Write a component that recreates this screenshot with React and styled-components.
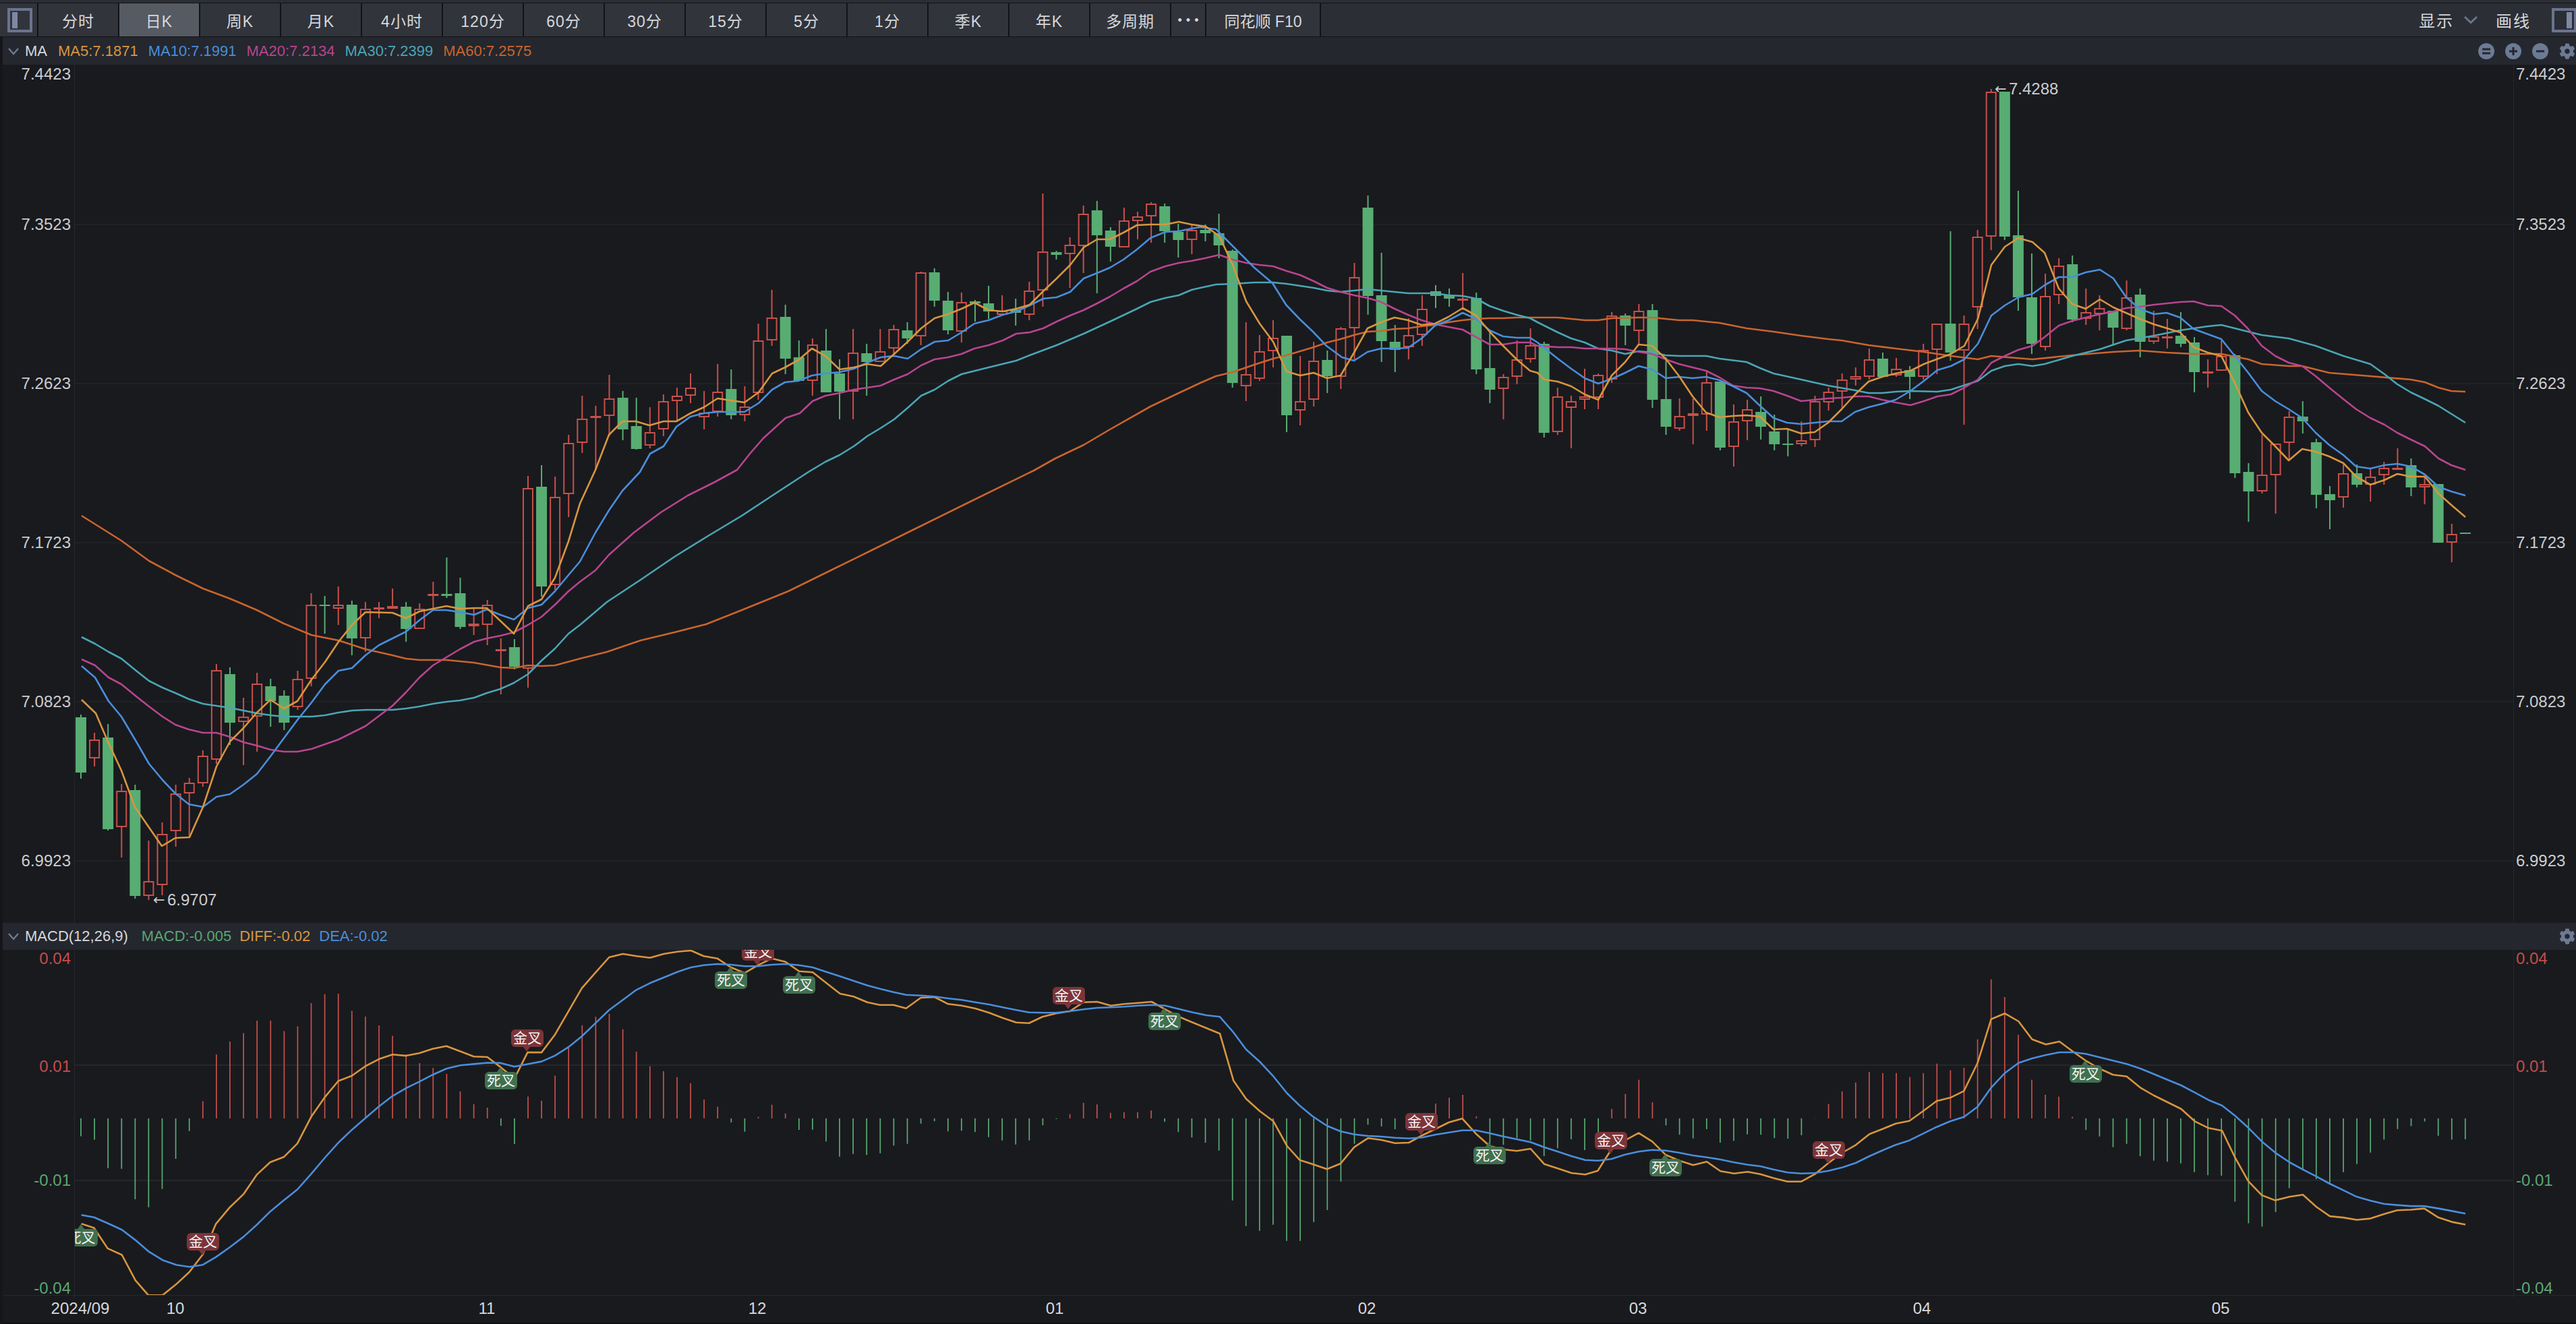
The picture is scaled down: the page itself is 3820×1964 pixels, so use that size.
import React from "react";
import styled, { createGlobalStyle } from "styled-components";
import { FaCog } from "react-icons/fa";

const FONT = `"Liberation Sans", "Noto Sans CJK SC", sans-serif`;
const C = {
  bg: "#191a1e", head: "#24272e", top: "#2b2e35", btn: "#31343b", active: "#555a63", line: "#121316",
  grid: "#222429", axis: "#26282d", text: "#d6d8dc", tick: "#cbcdd0", icon: "#6d7a94",
  up: "#c8504b", down: "#58ad73", ma5: "#d8963f", ma10: "#4a8edb", ma20: "#b8458f", ma30: "#4aa6b5", ma60: "#c9652e",
  macdUp: "#c44d4b", macdDown: "#5ba672",
};

const Global = createGlobalStyle`
  html, body { margin: 0; padding: 0; background: ${C.bg}; }
  * { box-sizing: border-box; }
`;

const Root = styled.div`
  width: 3820px; height: 1964px; overflow: hidden; display: flex; flex-direction: column;
  background: ${C.bg}; font-family: ${FONT}; padding-left: 4px; border-left: 0;
  box-shadow: inset 4px 0 0 #15161a;
`;
const TopStrip = styled.div`height: 5px; background: ${C.top}; border-bottom: 1px solid ${C.line}; margin-left: -4px;`;
const Toolbar = styled.div`
  height: 50px; display: flex; align-items: stretch; background: ${C.top};
  border-bottom: 1px solid ${C.line}; margin-left: -4px;
`;
const LayoutCell = styled.div`width: 57px; display: flex; align-items: center; padding-left: 11px; background: ${C.btn}; border-right: 2px solid ${C.line};`;
const Tab = styled.div`
  width: ${p => p.$w || 120}px; display: flex; align-items: center; justify-content: center;
  font-size: 23px; letter-spacing: ${p => p.$tight ? 0 : 1}px; color: ${C.text}; background: ${p => p.$active ? C.active : C.btn};
  border-right: 2px solid ${C.line};
`;
const Dots = styled.span`font-size: 18px; letter-spacing: 6px; margin-right: -6px; line-height: 1; color: ${C.text};`;
const ToolRight = styled.div`margin-left: auto; display: flex; align-items: center; color: ${C.text}; font-size: 24px; margin-right: -1px;`;
const ToolLabel = styled.span`letter-spacing: 2px; margin-right: ${p => p.$mr}px;`;

const LegendBar = styled.div`
  height: ${p => p.$h}px; display: flex; align-items: center; background: ${C.head};
  font-size: 22px; padding-left: 7px;
`;
const Chevron = styled.svg`width: 18px; height: 12px; margin-right: 8px; flex: none;`;
const Name = styled.span`color: ${C.text}; margin-right: ${p => p.$mr}px;`;
const Value = styled.span`color: ${p => p.$c}; margin-right: ${p => p.$mr}px; white-space: nowrap;`;
const Tools = styled.div`margin-left: auto; display: flex; align-items: center; gap: 16px; padding-right: 1px; color: ${C.icon};`;

const Pane = styled.div`
  height: ${p => p.$h}px; display: grid; grid-template-columns: 107px 3616px 93px;
  ${p => p.$bottom && `border-bottom: 1px solid ${C.axis};`}
`;
const Axis = styled.div`
  display: flex; flex-direction: column; font-size: 24px;
  ${p => p.$left ? `align-items: flex-end; padding-right: 5px; border-right: 1px solid ${C.axis};` : `align-items: flex-start; padding-left: 3px; border-left: 1px solid ${C.axis};`}
`;
const Tick = styled.div`height: 28px; line-height: 28px; margin-top: ${p => p.$gap}px; color: ${p => p.$c || C.tick}; white-space: nowrap;`;
const Plot = styled.div`position: relative; overflow: hidden;`;
const ChartSvg = styled.svg`display: block;`;
const PriceTag = styled.div`position: absolute; display: flex; align-items: center; font-size: 24px; line-height: 28px; color: ${C.tick}; white-space: nowrap;`;
const Arrow = styled.span`width: 21px; font-family: "DejaVu Sans", sans-serif; font-size: 21px; letter-spacing: -2px;`;
const Badge = styled.div`
  position: absolute; width: 48px; height: 26px; border-radius: 6px; text-align: center;
  font-size: 21px; line-height: 26px; color: #f4f4f4; background: ${p => p.$kind === "gold" ? "#7c3439" : "#40704f"};
  &::after {
    content: ""; position: absolute; left: 18px; border-left: 5px solid transparent; border-right: 5px solid transparent;
    ${p => p.$kind === "gold"
      ? `top: 26px; border-top: 7px solid #7c3439;`
      : `top: -7px; border-bottom: 7px solid #40704f;`}
  }
`;
const TimeAxis = styled.div`position: relative; flex: 1; border-bottom: 2px solid #101114;`;
const TimeTick = styled.span`position: absolute; top: 5px; transform: translateX(-50%); font-size: 24px; line-height: 28px; color: ${C.text}; white-space: nowrap;`;

const candles = [
[1060,1064,1146,1155,0],[1087,1097,1125,1137,1],[1074,1094,1230,1232,0],[1163,1173,1227,1272,1],[1164,1172,1329,1333,0],
[1247,1307,1329,1335,1],[1220,1237,1313,1328,1],[1164,1177,1233,1256,1],[1154,1161,1177,1242,1],[1113,1121,1162,1167,1],
[985,994,1127,1133,1],[990,1000,1072,1105,0],[1035,1063,1071,1135,1],[998,1014,1063,1115,1],[1007,1018,1040,1078,0],
[1024,1032,1072,1083,0],[995,1007,1049,1053,1],[880,897,1007,1018,1],[884,897,899,940,0],[870,897,903,927,1],
[891,897,947,972,0],[893,903,947,967,1],[893,901,903,917,1],[873,899,903,903,1],[893,900,933,952,0],
[895,903,933,933,1],[863,881,883,903,1],[827,881,884,887,0],[857,880,930,933,0],[903,925,929,942,1],
[890,897,927,957,1],[947,963,966,1030,1],[948,960,989,993,0],[706,724,992,1020,1],[690,722,870,885,0],
[707,737,868,875,1],[645,657,733,767,1],[587,621,657,672,1],[602,617,619,697,1],[556,591,617,647,1],
[580,590,637,653,0],[590,632,666,667,0],[604,641,661,665,1],[585,595,637,647,1],[575,587,595,625,1],
[554,575,587,598,1],[580,612,619,637,1],[540,581,611,618,1],[548,577,616,622,0],[573,603,616,625,1],
[480,505,583,593,1],[430,471,505,513,1],[452,470,532,555,0],[505,530,565,565,0],[502,511,565,587,1],
[488,520,582,582,0],[533,554,581,622,0],[488,523,581,622,1],[510,524,537,587,0],[488,521,537,537,1],
[482,488,517,527,1],[478,490,502,510,0],[403,404,499,512,1],[398,404,446,455,0],[433,446,490,496,0],
[434,448,492,508,1],[445,447,450,477,0],[424,450,462,473,0],[438,461,467,468,1],[443,459,464,483,0],
[418,431,467,475,1],[287,373,431,455,1],[372,374,378,385,0],[352,363,377,427,1],[305,317,365,405,1],
[298,312,349,435,0],[337,342,366,388,0],[308,327,367,367,1],[314,321,328,355,1],[300,302,321,360,1],
[302,306,343,360,0],[332,344,356,382,0],[332,341,356,377,1],[333,341,346,358,0],[317,346,364,383,0],
[370,372,568,575,0],[478,555,573,595,1],[497,521,562,565,1],[475,501,521,545,1],[498,498,616,641,0],
[528,595,609,631,1],[507,535,593,603,1],[520,534,558,583,0],[485,487,559,577,1],[390,411,487,533,1],
[290,308,439,467,0],[375,438,506,537,0],[482,507,519,552,0],[472,497,515,533,1],[438,458,497,513,1],
[423,432,439,457,0],[428,438,443,455,0],[405,443,444,460,1],[434,442,548,555,0],[493,546,578,598,0],
[555,559,577,622,1],[505,533,559,570,1],[487,512,533,538,1],[507,510,642,649,0],[575,588,641,645,1],
[587,595,605,665,1],[547,588,593,607,1],[554,556,590,607,1],[463,468,563,568,1],[465,468,483,512,0],
[451,461,491,512,1],[451,460,593,605,0],[530,592,633,645,0],[591,617,636,639,1],[591,613,617,659,1],
[549,567,615,639,1],[566,566,664,668,0],[600,625,663,692,1],[593,607,625,653,1],[588,611,633,652,0],
[615,640,659,668,0],[636,658,659,677,0],[625,653,659,662,1],[587,595,653,663,1],[575,581,597,609,1],
[554,563,581,607,1],[545,558,563,572,1],[517,533,559,563,1],[523,532,559,559,0],[531,547,557,559,1],
[543,549,559,592,0],[510,519,559,563,1],[480,480,519,555,1],[343,480,523,535,0],[468,480,520,630,1],
[341,351,456,488,1],[132,136,351,371,1],[136,136,351,356,0],[283,349,441,461,0],[376,441,510,525,0],
[406,439,515,520,1],[383,394,438,451,1],[379,392,474,478,0],[428,463,473,482,1],[438,457,466,490,1],
[461,461,486,513,0],[416,441,488,490,1],[428,437,507,530,0],[461,499,507,510,1],[473,499,500,517,1],
[463,498,510,515,0],[500,508,552,582,0],[533,551,554,575,1],[505,528,550,550,1],[525,527,702,709,0],
[687,700,729,774,0],[645,704,729,732,1],[658,658,705,762,1],[610,618,657,682,1],[595,618,625,643,0],
[651,656,734,754,0],[721,733,742,785,0],[689,702,738,753,1],[689,702,719,723,0],[696,707,719,744,1],
[685,694,705,719,1],[665,694,697,697,1],[680,690,723,736,0],[707,718,723,748,1],[718,718,805,805,0],
[777,792,805,834,1],[790,790,791,791,0],
];
const cx = i => 120 + 20.09 * i;

const ma5 = "121,1038 142,1058 160,1100 180,1143 200,1197 240,1255 260,1243 281,1242 301,1197 321,1137 341,1100 361,1080 381,1057 401,1038 421,1051 441,1040 462,1008 482,982 502,952 522,927 542,908 582,909 602,917 622,907 642,903 662,899 682,903 703,902 722,902 762,940 783,899 803,889 823,857 843,803 860,747 883,697 903,645 923,625 943,625 963,631 984,625 1003,625 1024,613 1044,604 1064,591 1084,594 1104,597 1125,582 1145,554 1164,545 1184,534 1204,517 1224,528 1245,548 1266,545 1286,540 1306,543 1326,525 1346,507 1366,487 1386,472 1406,466 1426,458 1445,449 1466,460 1487,462 1507,458 1527,452 1547,432 1567,413 1587,393 1607,367 1627,355 1646,355 1666,345 1686,334 1706,333 1728,333 1748,329 1767,333 1788,336 1808,350 1828,393 1848,447 1868,480 1888,507 1908,551 1928,557 1948,553 1968,561 1988,557 2008,523 2028,487 2048,478 2068,471 2088,475 2108,482 2128,480 2148,470 2169,457 2189,468 2209,492 2229,513 2249,533 2269,550 2280,553 2290,563 2310,566 2330,573 2350,585 2370,593 2390,557 2410,537 2430,511 2450,513 2470,532 2490,558 2510,588 2530,612 2550,619 2570,617 2590,616 2610,618 2630,637 2650,636 2671,643 2691,641 2711,627 2731,607 2751,585 2771,566 2791,559 2811,554 2833,550 2853,540 2893,525 2913,513 2933,473 2953,393 2973,366 2993,353 3014,359 3032,375 3053,428 3073,451 3093,458 3114,444 3134,456 3173,473 3194,481 3233,493 3253,515 3274,523 3294,528 3314,568 3334,612 3354,642 3374,662 3394,683 3414,666 3434,670 3454,677 3475,687 3494,707 3515,719 3536,712 3555,703 3575,707 3596,707 3616,732 3635,749 3656,767";
const ma10 = "121,988 141,1005 161,1040 180,1063 202,1100 221,1133 241,1157 260,1177 280,1193 301,1197 321,1182 341,1178 361,1164 381,1148 401,1122 421,1095 441,1068 462,1042 482,1015 502,995 522,991 542,972 562,957 582,947 602,937 622,920 642,905 662,905 682,908 703,912 722,904 742,912 762,919 783,902 803,897 823,877 843,853 860,833 883,790 903,757 923,728 949,700 964,673 984,662 1003,633 1024,618 1044,613 1064,611 1084,611 1104,611 1125,598 1145,578 1164,567 1184,565 1204,557 1224,554 1245,552 1266,547 1286,538 1306,530 1326,528 1346,532 1366,518 1386,507 1406,505 1426,493 1445,480 1466,475 1487,467 1507,462 1527,453 1547,443 1567,441 1587,433 1607,413 1627,405 1646,397 1666,385 1686,370 1706,353 1728,344 1748,343 1767,339 1780,337 1803,340 1815,352 1833,370 1860,397 1887,420 1907,452 1927,473 1947,492 1967,513 1990,530 2008,535 2028,522 2048,517 2068,517 2088,516 2108,502 2128,483 2148,475 2169,464 2189,473 2209,490 2229,499 2249,501 2269,501 2280,508 2310,532 2330,547 2350,561 2370,569 2390,562 2410,553 2430,543 2450,548 2470,561 2490,559 2510,561 2530,559 2550,564 2570,573 2590,583 2610,602 2630,620 2650,627 2671,629 2691,627 2711,625 2731,625 2751,611 2771,604 2791,599 2811,593 2833,580 2853,565 2873,549 2893,543 2913,533 2933,510 2953,468 2973,453 2993,441 3014,436 3032,423 3053,411 3073,411 3093,404 3114,400 3134,413 3153,441 3173,458 3194,466 3213,464 3233,471 3253,488 3294,503 3314,528 3334,553 3354,580 3374,595 3394,607 3414,620 3434,642 3454,660 3475,675 3494,692 3515,695 3536,690 3555,688 3575,692 3596,704 3616,722 3635,729 3656,735";
const ma20 = "121,978 141,987 161,1005 180,1015 202,1033 221,1048 241,1063 260,1075 280,1082 301,1087 321,1087 341,1093 361,1101 381,1106 401,1112 421,1115 441,1115 462,1111 482,1104 502,1097 522,1087 542,1077 562,1062 582,1047 602,1027 622,1005 642,987 662,975 682,963 703,952 722,947 742,943 762,938 783,927 803,915 823,897 843,877 860,863 883,846 903,823 940,790 980,760 1020,735 1060,715 1093,697 1112,673 1132,650 1165,620 1186,613 1205,595 1224,587 1245,583 1266,578 1286,575 1306,572 1326,563 1346,555 1366,542 1386,533 1406,530 1426,525 1445,517 1466,512 1487,505 1507,495 1527,493 1547,487 1567,477 1587,468 1607,460 1627,450 1646,440 1666,428 1686,417 1706,403 1728,395 1748,390 1767,387 1787,383 1808,378 1828,385 1848,390 1868,393 1888,395 1908,402 1928,408 1948,417 1968,427 1988,433 2008,438 2028,442 2048,448 2068,458 2088,467 2108,475 2128,481 2148,485 2169,489 2189,500 2209,511 2229,511 2249,508 2269,508 2280,513 2310,515 2330,515 2350,517 2370,517 2390,517 2410,518 2430,522 2450,525 2470,533 2490,540 2510,545 2530,550 2550,560 2570,572 2590,575 2610,576 2630,580 2650,587 2671,595 2691,593 2711,591 2731,590 2751,588 2771,588 2791,593 2811,597 2833,601 2853,595 2873,588 2893,585 2913,575 2933,563 2953,538 2973,528 2993,519 3014,513 3032,500 3053,483 3073,476 3093,471 3114,466 3134,462 3153,457 3173,455 3194,452 3233,448 3253,447 3274,453 3294,454 3314,468 3334,488 3354,513 3374,528 3394,538 3414,543 3434,558 3454,575 3475,592 3494,607 3515,620 3536,630 3555,642 3575,652 3596,662 3616,680 3635,690 3656,697";
const ma30 = "121,945 141,955 161,967 180,977 202,995 221,1010 241,1020 260,1028 280,1037 301,1044 321,1047 341,1050 361,1054 381,1058 401,1061 421,1063 441,1063 462,1063 482,1061 502,1057 522,1054 542,1053 562,1053 582,1053 602,1051 622,1048 642,1044 662,1041 682,1039 703,1035 722,1028 742,1022 762,1013 783,1000 803,980 823,962 843,940 860,927 900,893 950,860 1000,826 1050,795 1100,765 1150,732 1199,700 1224,685 1245,675 1266,662 1286,647 1306,635 1326,622 1346,605 1366,587 1386,578 1406,565 1426,555 1466,545 1507,535 1527,527 1567,512 1607,495 1646,477 1686,458 1706,448 1728,442 1748,438 1767,430 1780,427 1803,422 1828,421 1860,419 1888,419 1908,421 1928,424 1948,427 1968,431 1988,433 2008,431 2028,429 2048,431 2068,433 2088,435 2108,435 2128,435 2148,438 2169,439 2189,443 2209,454 2229,461 2249,467 2269,472 2280,478 2310,493 2330,502 2350,508 2370,517 2390,520 2410,525 2430,521 2450,523 2470,527 2490,528 2530,528 2550,532 2590,537 2610,546 2630,554 2671,563 2711,572 2751,579 2771,583 2791,583 2811,581 2833,580 2873,581 2893,578 2933,565 2953,550 2973,543 2993,540 3014,543 3032,540 3073,528 3114,518 3153,505 3194,498 3233,490 3274,484 3294,482 3314,487 3354,497 3394,502 3434,513 3475,528 3515,540 3536,555 3555,570 3575,582 3596,592 3616,602 3656,627";
const ma60 = "121,765 180,802 221,832 260,853 301,873 341,888 381,905 421,925 462,942 502,950 542,963 582,972 602,977 622,979 662,979 703,983 742,990 762,991 783,987 803,988 823,987 860,977 900,967 950,950 1000,938 1047,926 1100,905 1169,877 1230,847 1291,817 1360,783 1437,745 1533,698 1565,680 1607,660 1646,637 1706,603 1748,583 1780,568 1803,558 1828,552 1860,541 1888,532 1908,527 1948,515 1968,508 1988,503 2008,497 2028,492 2048,491 2068,488 2088,487 2108,484 2128,482 2148,478 2169,475 2189,473 2209,472 2229,472 2249,471 2310,471 2330,473 2350,475 2370,475 2390,472 2430,471 2450,471 2470,473 2490,475 2510,475 2550,479 2590,487 2630,492 2671,498 2711,503 2731,505 2771,512 2811,517 2853,522 2893,528 2933,533 2953,528 3014,533 3073,527 3134,522 3173,520 3213,523 3253,525 3294,525 3334,533 3354,540 3394,543 3414,543 3454,553 3515,558 3575,563 3596,567 3616,575 3635,580 3656,581";

// MACD histogram: y of each bar's end on the page
const h5 = [845,858,968,970,1088,1118,1048,932,825,710,530,480,448,400,400,440,422,332,298,296,362,384,418,458,530,563,582,605,672,722,735,805,875,692,708,612,505,418].map(v => 1360 + v / 2.596);
const h12 = [325,312,380,480,545,567,593,620,693,725,795,836,770,716,755,828,827,880,947,935,940,932,898,890,800,790,835,832,838,860,875,893,875,808,780,758,708,715,752,750,750,742,792,838,862,885,920,1142,1256,1277,1250,1322,1322,1238,1185,1058,890,805,813,825,805,800,711,685,672,768,890,895,865,875,945,910,870,918,870,735,668,605,705,808,850,866,825,885,877,848,850,865,867,852,776,713,657,617,570,575,575,593,575,533,563,552,425,158,237,405,605,672,680,770,828,857,905,890,945,965,970,977,1016,1030,1032].map(v => 1400 + v / 3);
const h8 = [1097,1180,1193,1137,1045,977,1010,1025,983,952,908,858,817,806,788,843,858,857].map(v => 1360 + v / 2.596);
const macdBars = [...h5, ...h12, ...h8];
const ZERO = 1659;

const z5 = a => a.map(([x, y]) => `${(x / 1.742).toFixed(1)},${(1360 + y / 2.596).toFixed(1)}`).join(" ");
const z12 = a => a.map(([x, y]) => `${(880 + x / 0.6426).toFixed(1)},${(1400 + y / 3).toFixed(1)}`).join(" ");
const z8 = a => a.map(([x, y]) => `${(3300 + x / 3).toFixed(1)},${(1360 + y / 2.596).toFixed(1)}`).join(" ");

const diff = [
  z5([[210,1182],[243,1198],[278,1277],[315,1302],[350,1400],[383,1457],[420,1457],[455,1415],[489,1368],[524,1300],[558,1182],[594,1118],[629,1068],[664,992],[698,945],[733,925],[768,873],[804,770],[839,695],[874,632],[909,612],[944,575],[979,548],[1014,530],[1049,535],[1083,525],[1118,508],[1153,498],[1189,518],[1224,538],[1259,540],[1294,580],[1329,622],[1363,522],[1399,522],[1433,455],[1468,365],[1503,275],[1538,215]]),
  z12([[15,60],[28,45],[41,55],[54,62],[67,45],[80,35],[93,30],[105,55],[118,65],[131,105],[144,130],[157,95],[170,65],[183,80],[196,122],[209,127],[222,175],[235,222],[248,235],[261,260],[273,272],[286,272],[298,287],[312,240],[325,237],[338,268],[351,275],[364,288],[377,307],[390,330],[403,350],[415,353],[428,325],[441,310],[454,300],[467,260],[480,258],[493,275],[506,268],[519,263],[532,258],[545,292],[558,325],[571,350],[584,375],[597,400],[610,610],[622,690],[635,745],[648,790],[661,900],[673,962],[686,982],[699,1003],[712,978],[725,905],[738,865],[751,873],[764,887],[777,885],[790,852],[802,825],[815,795],[828,778],[841,845],[854,900],[867,915],[880,922],[893,912],[906,980],[919,1000],[932,1020],[945,1027],[957,1010],[970,915],[983,875],[996,842],[1009,880],[1022,940],[1035,965],[1048,985],[1061,970],[1074,1012],[1087,1022],[1100,1015],[1112,1025],[1125,1043],[1138,1058],[1151,1058],[1164,1025],[1177,975],[1190,930],[1203,895],[1216,847],[1228,825],[1241,800],[1254,788],[1267,745],[1280,700],[1293,685],[1306,655],[1319,530],[1332,335],[1345,310],[1358,345],[1371,425],[1384,448],[1397,435],[1410,480],[1422,520],[1435,555],[1448,583],[1461,590],[1474,640],[1487,675],[1500,705],[1513,735],[1526,790],[1539,820],[1552,832]]),
  z8([[42,925],[102,1018],[162,1072],[222,1092],[285,1078],[345,1070],[405,1117],[465,1153],[525,1158],[585,1167],[645,1162],[705,1145],[765,1130],[825,1128],[885,1123],[948,1158],[1008,1175],[1068,1185]]),
].join(" ");
const dea = [
  z5([[210,1148],[243,1157],[278,1180],[315,1205],[350,1245],[383,1288],[420,1322],[455,1340],[489,1348],[524,1340],[558,1310],[594,1272],[629,1232],[664,1185],[698,1135],[733,1092],[768,1050],[804,990],[839,928],[874,870],[909,820],[944,775],[979,730],[1014,690],[1049,660],[1083,635],[1118,608],[1153,585],[1189,572],[1224,567],[1259,562],[1294,563],[1329,577],[1363,567],[1399,557],[1433,535],[1468,502],[1503,460],[1538,410]]),
  z12([[15,295],[28,250],[41,205],[54,175],[67,150],[80,125],[93,105],[105,95],[118,90],[131,93],[144,100],[157,100],[170,93],[183,90],[196,95],[209,105],[222,125],[235,145],[248,165],[261,185],[273,200],[286,215],[298,227],[312,230],[325,235],[338,243],[351,250],[364,260],[377,270],[390,283],[403,295],[415,305],[428,307],[441,307],[454,300],[467,292],[480,285],[493,283],[506,280],[519,275],[532,272],[545,275],[558,290],[571,305],[584,318],[597,325],[610,395],[622,470],[635,525],[648,590],[661,665],[673,720],[686,770],[699,810],[712,835],[725,848],[738,855],[751,858],[764,863],[777,866],[790,862],[802,850],[815,840],[828,830],[841,830],[854,843],[867,857],[880,870],[893,883],[906,905],[919,925],[932,945],[945,962],[957,965],[970,958],[983,938],[996,925],[1009,917],[1022,920],[1035,930],[1048,942],[1061,950],[1074,960],[1087,973],[1100,983],[1112,990],[1125,1005],[1138,1018],[1151,1022],[1164,1020],[1177,1010],[1190,995],[1203,975],[1216,945],[1228,920],[1241,895],[1254,875],[1267,845],[1280,815],[1293,790],[1306,770],[1319,725],[1332,640],[1345,575],[1358,530],[1371,510],[1384,495],[1397,483],[1410,483],[1422,490],[1435,505],[1448,520],[1461,535],[1474,555],[1487,580],[1500,605],[1513,630],[1526,662],[1539,695],[1552,720]]),
  z8([[42,765],[102,812],[162,865],[222,908],[285,945],[345,973],[405,1000],[465,1028],[525,1053],[585,1078],[645,1093],[705,1105],[765,1110],[825,1114],[885,1114],[948,1123],[1008,1133],[1068,1143]]),
].join(" ");

const badges = [
  ["dead", 120.5, 1836], ["gold", 301, 1842], ["dead", 743, 1603], ["gold", 782, 1540],
  ["gold", 1124, 1412], ["dead", 1084, 1454], ["dead", 1185, 1461], ["gold", 1585, 1477],
  ["dead", 1727, 1515], ["gold", 2108, 1664], ["dead", 2209, 1714], ["gold", 2389, 1692],
  ["dead", 2470, 1732], ["gold", 2712, 1706], ["dead", 3093, 1593],
];
const TABS = ["分时", "日K", "周K", "月K", "4小时", "120分", "60分", "30分", "15分", "5分", "1分", "季K", "年K", "多周期"];
const mainTicks = [["7.4423", 0], ["7.3523", 195], ["7.2623", 208], ["7.1723", 208], ["7.0823", 208], ["6.9923", 208]];
const macdTicks = [["0.04", -1, C.macdUp], ["0.01", 132, C.macdUp], ["-0.01", 141, C.macdDown], ["-0.04", 132, C.macdDown]];
const months = [["2024/09", 119], ["10", 260], ["11", 722], ["12", 1123], ["01", 1564], ["02", 2027], ["03", 2429], ["04", 2850], ["05", 3293]];

const LayoutIcon = ({ right }) => (
  <svg width="37" height="36" viewBox="0 0 37 36">
    <rect x="2" y="2" width="33" height="32" fill="none" stroke="#6a748e" strokeWidth="4" />
    <rect x={right ? 22 : 7} y="6" width="8" height="24" fill="#7d88a2" />
  </svg>
);
const Down = ({ mr = 0 }) => (
  <svg width="20" height="11" viewBox="0 0 20 11" style={{ marginRight: mr }}>
    <polyline points="1,1 10,9.5 19,1" fill="none" stroke="#6a748e" strokeWidth="3" />
  </svg>
);
const Collapse = () => (
  <Chevron viewBox="0 0 18 12"><polyline points="2,2 9,10 16,2" fill="none" stroke="#6f7a90" strokeWidth="2.4" /></Chevron>
);
const RoundBtn = ({ d }) => (
  <svg width="24" height="24" viewBox="0 0 24 24">
    <circle cx="12" cy="12" r="12" fill={C.icon} />
    <path d={d} stroke={C.head} strokeWidth="3" fill="none" />
  </svg>
);

const Candle = ({ c, i }) => {
  const [hi, top, bot, lo, red] = c;
  const x = cx(i);
  const col = red ? C.up : C.down;
  return (
    <g>
      <path d={`M${x} ${hi}V${top}M${x} ${bot}V${lo}`} stroke={col} strokeWidth="2" fill="none" />
      {red
        ? <rect x={x - 7} y={top + 1} width="14" height={Math.max(bot - top - 2, 1)} fill="none" stroke={col} strokeWidth="2" />
        : <rect x={x - 8} y={top} width="16" height={Math.max(bot - top, 2)} fill={col} />}
    </g>
  );
};
const Line = ({ pts, c, w = 2.6 }) => <polyline points={pts} fill="none" stroke={c} strokeWidth={w} strokeLinejoin="round" />;

export default function App() {
  const barPath = up => macdBars.map((y, i) => ((y < ZERO) === up ? `M${cx(i).toFixed(1)} ${ZERO}V${y.toFixed(1)}` : "")).join("");
  return (
    <Root>
      <Global />
      <TopStrip />
      <Toolbar>
        <LayoutCell><LayoutIcon /></LayoutCell>
        {TABS.map(t => <Tab key={t} $active={t === "日K"}>{t}</Tab>)}
        <Tab $w={52}><Dots>•••</Dots></Tab>
        <Tab $w={170} $tight>同花顺 F10</Tab>
        <ToolRight>
          <ToolLabel $mr={15}>显示</ToolLabel>
          <Down mr={27} />
          <ToolLabel $mr={31}>画线</ToolLabel>
          <LayoutIcon right />
        </ToolRight>
      </Toolbar>

      <LegendBar $h={41}>
        <Collapse />
        <Name $mr={16}>MA</Name>
        <Value $c={C.ma5} $mr={15}>MA5:7.1871</Value>
        <Value $c={C.ma10} $mr={15}>MA10:7.1991</Value>
        <Value $c={C.ma20} $mr={15}>MA20:7.2134</Value>
        <Value $c={C.ma30} $mr={15}>MA30:7.2399</Value>
        <Value $c={C.ma60} $mr={15}>MA60:7.2575</Value>
        <Tools>
          <RoundBtn d="M6 9H18M6 15H18" />
          <RoundBtn d="M6 12H18M12 6V18" />
          <RoundBtn d="M6 12H18" />
          <FaCog size={24} />
        </Tools>
      </LegendBar>
      <Pane $h={1273}>
        <Axis $left>{mainTicks.map(([t, g]) => <Tick key={t} $gap={g}>{t}</Tick>)}</Axis>
        <Plot>
          <ChartSvg width="3616" height="1273" viewBox="111 96 3616 1273">
            <path d="M111 333H3727M111 569H3727M111 805H3727M111 1041H3727M111 1277H3727" stroke={C.grid} strokeWidth="1.5" />
            {candles.map((c, i) => <Candle key={i} c={c} i={i} />)}
            <Line pts={ma60} c={C.ma60} />
            <Line pts={ma30} c={C.ma30} />
            <Line pts={ma20} c={C.ma20} />
            <Line pts={ma10} c={C.ma10} />
            <Line pts={ma5} c={C.ma5} />
          </ChartSvg>
          <PriceTag style={{ left: 2958 - 111, top: 132 - 96 - 14 }}><Arrow>←</Arrow>7.4288</PriceTag>
          <PriceTag style={{ left: 227 - 111, top: 1335 - 96 - 14 }}><Arrow>←</Arrow>6.9707</PriceTag>
        </Plot>
        <Axis>{mainTicks.map(([t, g]) => <Tick key={t} $gap={g}>{t}</Tick>)}</Axis>
      </Pane>

      <LegendBar $h={40}>
        <Collapse />
        <Name $mr={20}>MACD(12,26,9)</Name>
        <Value $c={C.macdDown} $mr={12}>MACD:-0.005</Value>
        <Value $c={C.ma5} $mr={13}>DIFF:-0.02</Value>
        <Value $c={C.ma10} $mr={13}>DEA:-0.02</Value>
        <Tools><FaCog size={24} /></Tools>
      </LegendBar>
      <Pane $h={513} $bottom>
        <Axis $left>{macdTicks.map(([t, g, c]) => <Tick key={t} $gap={g} $c={c}>{t}</Tick>)}</Axis>
        <Plot>
          <ChartSvg width="3616" height="512" viewBox="111 1409 3616 512">
            <path d="M111 1580H3727M111 1751H3727" stroke="#2a2c31" strokeWidth="1.5" />
            <path d={barPath(true)} stroke={C.up} strokeWidth="1.7" fill="none" />
            <path d={barPath(false)} stroke={C.down} strokeWidth="1.7" fill="none" />
            <Line pts={diff} c={C.ma5} />
            <Line pts={dea} c={C.ma10} />
          </ChartSvg>
          {badges.map(([k, x, y], i) => (
            <Badge key={i} $kind={k} style={{ left: x - 111 - 24, top: y - 1409 - 13 }}>{k === "gold" ? "金叉" : "死叉"}</Badge>
          ))}
        </Plot>
        <Axis>{macdTicks.map(([t, g, c]) => <Tick key={t} $gap={g} $c={c}>{t}</Tick>)}</Axis>
      </Pane>
      <TimeAxis>
        {months.map(([t, x]) => <TimeTick key={t} style={{ left: x - 4 }}>{t}</TimeTick>)}
      </TimeAxis>
    </Root>
  );
}
